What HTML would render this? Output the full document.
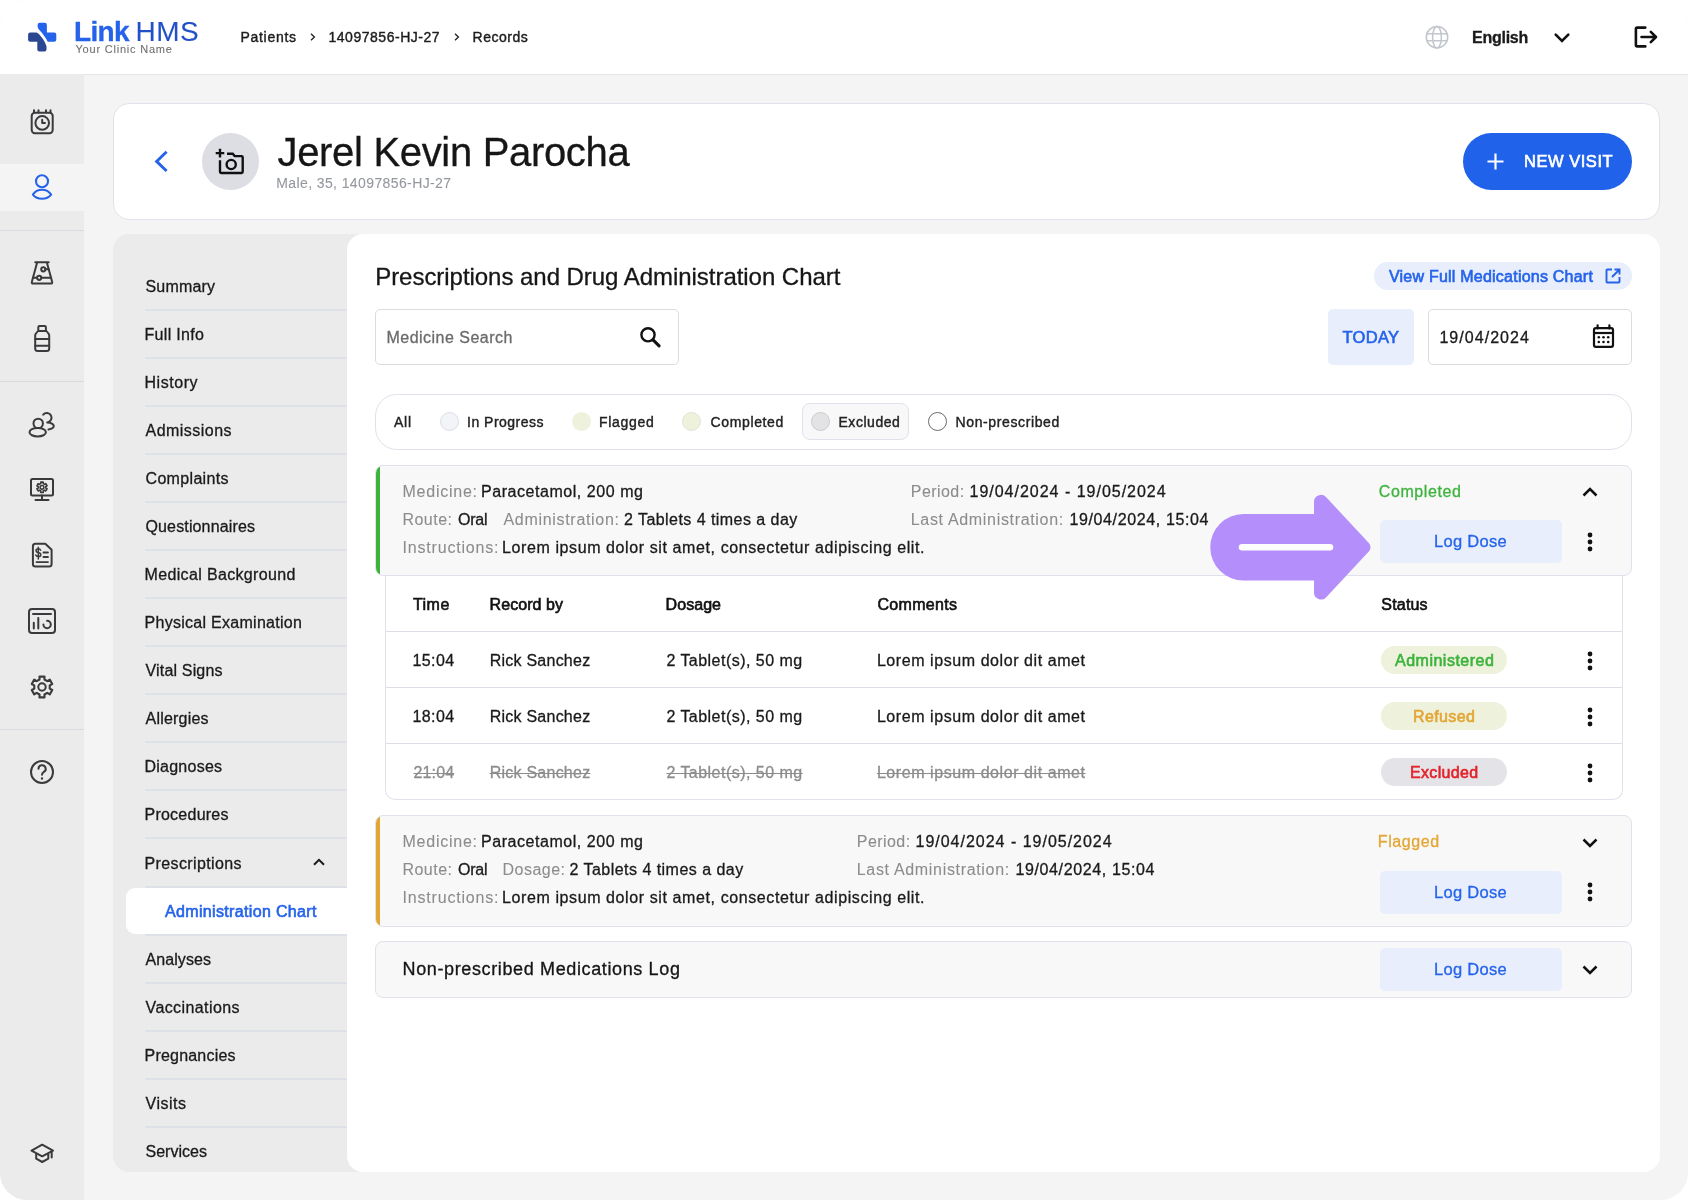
<!DOCTYPE html>
<html lang="en">
<head>
<meta charset="utf-8">
<title>Link HMS - Records</title>
<style>
*{box-sizing:border-box;margin:0;padding:0}
html,body{width:1688px;height:1200px;background:#fff;overflow:hidden}
body{font-family:"Liberation Sans",Arial,sans-serif;color:#1a1a1a}
#app{position:absolute;left:0;top:0;width:1688px;height:1200px;background:#f4f4f4;border-radius:27px;overflow:hidden;will-change:transform}
.t{position:absolute;white-space:pre;line-height:1}
.b{position:absolute}
svg{position:absolute;overflow:visible}
#hdr{position:absolute;left:0;top:0;width:1688px;height:75px;background:#fff;border-bottom:1px solid #e4e4e7}
#side{position:absolute;left:0;top:74px;width:84px;height:1126px;background:#ebebeb}
#side .act{position:absolute;left:0;top:90px;width:84px;height:47px;background:#f4f4f4}
#side .dv{position:absolute;left:0;width:84px;height:1px;background:#d8dadf}
.ic{fill:none;stroke:#3a3a3c;stroke-width:1.9;stroke-linecap:round;stroke-linejoin:round}
#pcard{position:absolute;left:113px;top:103px;width:1547px;height:117px;background:#fff;border:1px solid #dfe2ea;border-radius:16px}
#wrap{position:absolute;left:113px;top:234px;width:1547px;height:938px;background:#ebebeb;border-radius:16px}
#panel{position:absolute;left:347px;top:234px;width:1313px;height:938px;background:#fff;border-radius:16px}
.nl{position:absolute;left:145px;width:202px;height:2px;background:#dee1e8}
.navact{position:absolute;left:126px;top:888px;width:221px;height:46px;background:#fff;border-radius:9px 0 0 9px}
.box{position:absolute;border:1px solid #dfe2ea;background:#fff}
.card{position:absolute;left:375px;width:1257px;border:1px solid #dfe2ea;border-radius:8px;background:#f8f8f8;overflow:hidden}
.card i{position:absolute;left:0;top:0;bottom:0;width:4px}
.btn{position:absolute;background:#e8eefb;border-radius:5px}
.badge{position:absolute;left:1381px;width:126px;height:28px;border-radius:14px}
.rl{position:absolute;left:386px;width:1236px;height:1px;background:#dcdfe5}

.t{-webkit-text-stroke:.3px currentColor}
.l{-webkit-text-stroke:.08px currentColor}
.m{-webkit-text-stroke:.62px currentColor}
.m2{-webkit-text-stroke:.4px currentColor}
.m3{-webkit-text-stroke:.32px currentColor}
.s{text-decoration:line-through;text-decoration-thickness:1px}
</style>
</head>
<body>
<div id="app">

<header id="hdr">
<svg style="left:0;top:0" width="80" height="74" viewBox="0 0 80 74">
<path d="M39.700 22.800H44.800a2.100 2.100 0 0 1 2.100 2.100V32.400H54.200a2.100 2.100 0 0 1 2.100 2.100V39.700a2.100 2.100 0 0 1-2.100 2.100H47.700C45.600 37.500 42.700 33.600 39.600 30.300 38.200 28.800 37.600 27.600 37.600 26V24.900a2.100 2.100 0 0 1 2.100-2.100z" fill="#2563eb"/>
<path d="M30.200 32.400H35.500C37 32.400 37.900 32.900 38.900 34 42 37.400 45 41.500 46.500 46.300V49.400a2.100 2.100 0 0 1-2.100 2.100H39.400a2.100 2.100 0 0 1-2.100-2.100V41.800H30.200a2.100 2.100 0 0 1-2.100-2.100V34.500a2.100 2.100 0 0 1 2.100-2.100z" fill="#2b4792"/>
</svg>
<span class="t" style="left:74.00px;top:17.75px;font-size:28px;font-weight:700;color:#2563eb;letter-spacing:-0.66px;">Link</span>
<span class="t l" style="left:135.50px;top:17.75px;font-size:28px;color:#2150c8;letter-spacing:0.48px;">HMS</span>
<span class="t l" style="left:75.50px;top:43.75px;font-size:11px;color:#6f6f6f;letter-spacing:0.79px;">Your Clinic Name</span>
<span class="t m2" style="left:240.50px;top:30.25px;font-size:14px;color:#1c1c1c;letter-spacing:0.70px;">Patients</span>
<span class="t m2" style="left:328.50px;top:30.25px;font-size:14px;color:#1c1c1c;letter-spacing:0.52px;">14097856-HJ-27</span>
<span class="t m2" style="left:472.50px;top:30.25px;font-size:14px;color:#1c1c1c;letter-spacing:0.53px;">Records</span>
<svg style="left:308px;top:32px" width="10" height="10" viewBox="0 0 10 10"><path d="M3 1.800L6.400 5 3 8.200" fill="none" stroke="#222" stroke-width="1.300"/></svg>
<svg style="left:452px;top:32px" width="10" height="10" viewBox="0 0 10 10"><path d="M3 1.800L6.400 5 3 8.200" fill="none" stroke="#222" stroke-width="1.300"/></svg>
<svg style="left:1425px;top:25px" width="24" height="24" viewBox="0 0 24 24" fill="none" stroke="#c3c6cd" stroke-width="1.500"><circle cx="12" cy="12.200" r="10.700"/><ellipse cx="12" cy="12.200" rx="4.400" ry="10.700"/><path d="M2 8.700h20M2 15.700h20"/></svg>
<span class="t" style="left:1472.10px;top:29.75px;font-size:16px;font-weight:700;letter-spacing:-0.27px;">English</span>
<svg style="left:1552.500px;top:31px" width="18" height="14" viewBox="0 0 18 14"><path d="M2.700 3.700L9 10l6.300-6.300" fill="none" stroke="#111" stroke-width="2.600" stroke-linecap="round"/></svg>
<svg style="left:1632px;top:24px" width="28" height="26" viewBox="0 0 28 26" fill="none" stroke="#111" stroke-width="2.600" stroke-linecap="round" stroke-linejoin="round"><path d="M13.300 3.600H5.200a1.300 1.300 0 0 0-1.300 1.300v16.200a1.300 1.300 0 0 0 1.300 1.300H13.300"/><path d="M9.500 13h14M18.800 7.800L24 13l-5.200 5.200"/></svg>
</header>


<aside id="side">
<div class="act"></div>
<div class="dv" style="top:156px"></div>
<div class="dv" style="top:307px"></div>
<div class="dv" style="top:655px"></div>
<svg class="ic" style="left:26px;top:32px;stroke:#3a3a3c;stroke-width:2.0" width="32" height="32" viewBox="0 0 32 32"><rect x="5.700" y="6.800" width="21" height="20.400" rx="3.200"/><path d="M8 4.300v2M12.500 4.300v2M20 4.300v2M24.500 4.300v2"/><circle cx="16.200" cy="16.900" r="6.800"/><path d="M16.200 13.800v3.100h2.800"/></svg>
<svg class="ic" style="left:26px;top:97px;stroke:#2563eb;stroke-width:2.1" width="32" height="32" viewBox="0 0 32 32"><circle cx="16" cy="10.300" r="6"/><path d="M6.900 23.600C9 20.400 12.300 18.700 16 18.700S23 20.400 25.100 23.600C23 26.400 19.700 27.800 16 27.800S9 26.400 6.900 23.600Z"/></svg>
<svg class="ic" style="left:26px;top:182px;stroke:#3a3a3c;stroke-width:2.0" width="32" height="32" viewBox="0 0 32 32"><path d="M9.300 6.200h13.400M11.200 6.200L5.800 26a1.200 1.200 0 0 0 1.200 1.600h18a1.200 1.200 0 0 0 1.200-1.600L20.800 6.200"/><circle cx="17.300" cy="13.300" r="2.100"/><circle cx="13.200" cy="21.800" r="2.100"/><path d="M15.300 21.800H25M7 21.800h4M19.400 13.300h3.300"/></svg>
<svg class="ic" style="left:26px;top:248px;stroke:#3a3a3c;stroke-width:2.0" width="32" height="32" viewBox="0 0 32 32"><rect x="12.300" y="4" width="7.600" height="5" rx="1.200"/><path d="M12 9h8.400l2 2.500a2.500 2.500 0 0 1 .8 1.800v13.200a2.500 2.500 0 0 1-2.500 2.500h-9a2.500 2.500 0 0 1-2.500-2.500V13.300a2.500 2.500 0 0 1 .8-1.800z"/><path d="M9.200 17h14M9.200 23.700h14"/></svg>
<svg class="ic" style="left:26px;top:334px;stroke:#3a3a3c;stroke-width:2.0" width="32" height="32" viewBox="0 0 32 32"><circle cx="12.200" cy="15.400" r="4.700"/><ellipse cx="11.700" cy="24.200" rx="8.200" ry="4.300"/><path d="M17.200 6.700a4.700 4.700 0 1 1 4 7.700c3.600.300 6.600 1.700 6.600 3.700 0 1.700-2.300 3-5.300 3.500"/></svg>
<svg class="ic" style="left:26px;top:399px;stroke:#3a3a3c;stroke-width:2.0" width="32" height="32" viewBox="0 0 32 32"><rect x="5" y="6" width="22" height="16.500" rx="1.500"/><path d="M16 22.500v4.300M9.500 27h13"/><path d="M14.76 9.15 L17.24 9.15 L17.21 10.59 L18.60 11.40 L19.84 10.65 L21.08 12.79 L19.82 13.50 L19.82 15.10 L21.08 15.81 L19.84 17.95 L18.60 17.20 L17.21 18.01 L17.24 19.45 L14.76 19.45 L14.79 18.01 L13.40 17.20 L12.16 17.95 L10.92 15.81 L12.18 15.10 L12.18 13.50 L10.92 12.79 L12.16 10.65 L13.40 11.40 L14.79 10.59Z" style="stroke-width:1.600"/><circle cx="16" cy="14.300" r="1.900" style="stroke-width:1.500"/></svg>
<svg class="ic" style="left:26px;top:465px;stroke:#3a3a3c;stroke-width:2.0" width="32" height="32" viewBox="0 0 32 32"><path d="M9.400 4.800H19.300l6.300 6V25.100a2.500 2.500 0 0 1-2.500 2.500H9.400a2.500 2.500 0 0 1-2.500-2.500V7.300a2.500 2.500 0 0 1 2.500-2.500z"/><path d="M10.500 23.100h11.500M17.400 13.500h4.600M17.400 18h4.600" style="stroke-width:1.800"/><path d="M14.600 11.300c-.400-1-1.300-1.500-2.300-1.500-1.300 0-2.300.700-2.300 1.900s1 1.600 2.300 1.900c1.400.300 2.500.900 2.500 2.100 0 1.200-1.100 1.900-2.500 1.900-1.200 0-2.200-.600-2.500-1.600M12.300 8.200v11.800" style="stroke-width:1.500"/></svg>
<svg class="ic" style="left:26px;top:531px;stroke:#3a3a3c;stroke-width:2.0" width="32" height="32" viewBox="0 0 32 32"><rect x="3" y="4" width="26" height="24" rx="3"/><path d="M7 9h18M7.800 17.700v5.900M12.300 13.100v10.500"/><path d="M21.100 15.800a3.700 3.700 0 1 1-3.700 3.700" /></svg>
<svg class="ic" style="left:26px;top:597px;stroke:#3a3a3c;stroke-width:2.0" width="32" height="32" viewBox="0 0 32 32"><path d="M13.50 5.60 L18.50 5.60 L18.46 8.49 L21.27 10.12 L23.76 8.63 L26.26 12.96 L23.73 14.37 L23.73 17.63 L26.26 19.04 L23.76 23.37 L21.27 21.88 L18.46 23.51 L18.50 26.40 L13.50 26.40 L13.54 23.51 L10.73 21.88 L8.24 23.37 L5.74 19.04 L8.27 17.63 L8.27 14.37 L5.74 12.96 L8.24 8.63 L10.73 10.12 L13.54 8.49Z" style="stroke-width:2.100"/><circle cx="16" cy="16" r="3.700"/></svg>
<svg class="ic" style="left:26px;top:682px;stroke:#3a3a3c;stroke-width:2.0" width="32" height="32" viewBox="0 0 32 32"><circle cx="16" cy="16" r="11"/><path d="M12.500 12.800a3.600 3.600 0 1 1 5.400 3.100c-1.100.700-1.900 1.500-1.900 2.900"/><circle cx="16" cy="22.500" r=".6" fill="#3a3a3c" style="stroke-width:1.200"/></svg>
<svg class="ic" style="left:26px;top:1063px;stroke:#3a3a3c;stroke-width:2.0" width="32" height="32" viewBox="0 0 32 32"><path d="M16.200 7.700L5.500 13.600 16.200 19.300 27 13.600zM10.200 16.200v5.500L16.200 25l6.100-3.300v-5.500M25.700 14.400v6"/></svg>
</aside>

<section aria-label="Patient">

<div id="pcard"></div>
<svg style="left:150px;top:147px" width="24" height="28" viewBox="0 0 24 28"><path d="M16.600 4.800L6.600 14.400l10 9.600" fill="none" stroke="#2563eb" stroke-width="2.900"/></svg>
<div class="b" style="left:201.500px;top:133px;width:57px;height:57px;border-radius:50%;background:#dcdee4"></div>
<svg style="left:215px;top:147px" width="30" height="30" viewBox="0 0 30 30" fill="none" stroke="#111" stroke-width="2.400"><path d="M5 1.800v8.600M.700 6.100h8.600"/><path d="M12 6.800h5.700l2 2.300h6.800a1.200 1.200 0 0 1 1.200 1.200v14.500a1.200 1.200 0 0 1-1.200 1.200H6.200A1.200 1.200 0 0 1 5 24.800V13.200"/><circle cx="16.200" cy="17.500" r="4.600"/></svg>
<span class="t" style="left:277.50px;top:132.25px;font-size:40px;color:#161616;letter-spacing:-0.32px;">Jerel Kevin Parocha</span>
<span class="t l" style="left:276.30px;top:176.25px;font-size:14px;color:#94979e;letter-spacing:0.39px;">Male, 35, 14097856-HJ-27</span>
<div class="b" style="left:1463px;top:133px;width:169px;height:57px;border-radius:29px;background:#2062ea"></div>
<svg style="left:1486px;top:152px" width="19" height="19" viewBox="0 0 19 19"><path d="M9.500 1.500v16M1.500 9.500h16" stroke="#fff" stroke-width="2.200" fill="none"/></svg>
<span class="t m" style="left:1524.00px;top:153.00px;font-size:16.5px;color:#fff;letter-spacing:0.53px;">NEW VISIT</span>

</section>
<nav aria-label="Patient record sections">
<div id="wrap"></div>
<div class="navact"></div>
<div class="nl" style="top:309px"></div>
<span class="t" style="left:145.50px;top:278.75px;font-size:16px;letter-spacing:0.17px;">Summary</span>
<div class="nl" style="top:357px"></div>
<span class="t" style="left:144.50px;top:326.75px;font-size:16px;letter-spacing:0.31px;">Full Info</span>
<div class="nl" style="top:405px"></div>
<span class="t" style="left:144.50px;top:374.75px;font-size:16px;letter-spacing:0.54px;">History</span>
<div class="nl" style="top:453px"></div>
<span class="t" style="left:145.50px;top:422.75px;font-size:16px;letter-spacing:0.47px;">Admissions</span>
<div class="nl" style="top:501px"></div>
<span class="t" style="left:145.50px;top:470.75px;font-size:16px;letter-spacing:0.33px;">Complaints</span>
<div class="nl" style="top:549px"></div>
<span class="t" style="left:145.50px;top:518.75px;font-size:16px;letter-spacing:0.14px;">Questionnaires</span>
<div class="nl" style="top:597px"></div>
<span class="t" style="left:144.50px;top:566.75px;font-size:16px;letter-spacing:0.35px;">Medical Background</span>
<div class="nl" style="top:645px"></div>
<span class="t" style="left:144.50px;top:614.75px;font-size:16px;letter-spacing:0.28px;">Physical Examination</span>
<div class="nl" style="top:693px"></div>
<span class="t" style="left:145.50px;top:662.75px;font-size:16px;letter-spacing:0.17px;">Vital Signs</span>
<div class="nl" style="top:741px"></div>
<span class="t" style="left:145.50px;top:710.75px;font-size:16px;letter-spacing:0.21px;">Allergies</span>
<div class="nl" style="top:789px"></div>
<span class="t" style="left:144.50px;top:758.75px;font-size:16px;letter-spacing:0.24px;">Diagnoses</span>
<div class="nl" style="top:837px"></div>
<span class="t" style="left:144.50px;top:806.75px;font-size:16px;letter-spacing:0.24px;">Procedures</span>
<div class="nl" style="top:886px"></div>
<span class="t" style="left:144.50px;top:855.75px;font-size:16px;letter-spacing:0.38px;">Prescriptions</span>
<div class="nl" style="top:934px"></div>
<div class="nl" style="top:982px"></div>
<span class="t" style="left:145.50px;top:951.75px;font-size:16px;letter-spacing:0.08px;">Analyses</span>
<div class="nl" style="top:1030px"></div>
<span class="t" style="left:145.50px;top:999.75px;font-size:16px;letter-spacing:0.41px;">Vaccinations</span>
<div class="nl" style="top:1078px"></div>
<span class="t" style="left:144.50px;top:1047.75px;font-size:16px;letter-spacing:0.21px;">Pregnancies</span>
<div class="nl" style="top:1126px"></div>
<span class="t" style="left:145.50px;top:1095.75px;font-size:16px;letter-spacing:0.51px;">Visits</span>
<span class="t" style="left:145.50px;top:1143.75px;font-size:16px;letter-spacing:0.02px;">Services</span>
<span class="t m" style="left:165.00px;top:903.75px;font-size:16px;color:#2563eb;letter-spacing:0.34px;">Administration Chart</span>
<svg style="left:311px;top:855px" width="16" height="14" viewBox="0 0 16 14"><path d="M3 9.800L8 4.800l5 5" fill="none" stroke="#1a1a1a" stroke-width="2"/></svg>

</nav>
<main>

<div id="panel"></div>
<span class="t" style="left:375.20px;top:264.75px;font-size:24px;color:#161616;letter-spacing:-0.04px;">Prescriptions and Drug Administration Chart</span>
<div class="b" style="left:1374px;top:262px;width:258px;height:28px;border-radius:14px;background:#e8eefb"></div>
<span class="t m" style="left:1388.90px;top:268.75px;font-size:16px;color:#2563eb;letter-spacing:0.23px;">View Full Medications Chart</span>
<svg style="left:1604px;top:267px" width="18" height="18" viewBox="0 0 18 18" fill="none" stroke="#2563eb" stroke-width="1.900"><path d="M8 2.500H3.300a.8.800 0 0 0-.8.800v11.400a.8.800 0 0 0 .8.800h11.400a.8.800 0 0 0 .8-.800V10M10.500 2.500h5v5M15.500 2.500L8 10"/></svg>

<div class="box" style="left:375px;top:309px;width:304px;height:56px;border-radius:5px;border-color:#dcdcde"></div>
<span class="t" style="left:386.50px;top:329.75px;font-size:16px;color:#6b6b6b;letter-spacing:0.48px;">Medicine Search</span>
<svg style="left:638px;top:325px" width="24" height="24" viewBox="0 0 24 24" fill="none" stroke="#111" stroke-width="2.400"><circle cx="10" cy="9.800" r="6.600"/><path d="M15.300 15.100l5.800 5.800" stroke-width="3" stroke-linecap="round"/></svg>

<div class="b" style="left:1328px;top:309px;width:86px;height:56px;border-radius:5px;background:#e8eefb"></div>
<span class="t m" style="left:1342.50px;top:329.00px;font-size:16.5px;color:#2563eb;letter-spacing:0.30px;">TODAY</span>
<div class="box" style="left:1428px;top:309px;width:204px;height:56px;border-radius:5px;border-color:#dcdcde"></div>
<span class="t" style="left:1439.40px;top:329.75px;font-size:16px;letter-spacing:1.05px;">19/04/2024</span>
<svg style="left:1591px;top:322px" width="26" height="28" viewBox="0 0 26 28" fill="none" stroke="#111" stroke-width="2.200"><rect x="3" y="6.100" width="19" height="18.800" rx="1.900"/><path d="M3 11h19"/><path d="M6.600 3.400v3M18.400 3.400v3" stroke-linecap="round"/><g fill="#111" stroke="none"><circle cx="7.800" cy="15.300" r="1.300"/><circle cx="12.500" cy="15.300" r="1.300"/><circle cx="17.200" cy="15.300" r="1.300"/><circle cx="7.800" cy="20" r="1.300"/><circle cx="12.500" cy="20" r="1.300"/><circle cx="17.200" cy="20" r="1.300"/></g></svg>

<div class="box" style="left:375px;top:394px;width:1257px;height:56px;border-radius:22px"></div>
<div class="box" style="left:802px;top:403px;width:107px;height:37px;border-radius:8px;background:#f8f8f9"></div>
<span class="t m2" style="left:394.00px;top:415.25px;font-size:14px;color:#222;letter-spacing:0.78px;">All</span>
<span class="t m2" style="left:467.10px;top:415.25px;font-size:14px;color:#222;letter-spacing:0.48px;">In Progress</span>
<span class="t m2" style="left:599.00px;top:415.25px;font-size:14px;color:#222;letter-spacing:0.70px;">Flagged</span>
<span class="t m2" style="left:710.50px;top:415.25px;font-size:14px;color:#222;letter-spacing:0.64px;">Completed</span>
<span class="t m2" style="left:838.50px;top:415.25px;font-size:14px;color:#222;letter-spacing:0.53px;">Excluded</span>
<span class="t m2" style="left:955.50px;top:415.25px;font-size:14px;color:#222;letter-spacing:0.62px;">Non-prescribed</span>
<div class="b" style="left:439.500px;top:412px;width:19px;height:19px;border-radius:50%;background:#f3f4f7;border:1px solid #dcdfe8"></div>
<div class="b" style="left:571.500px;top:412px;width:19px;height:19px;border-radius:50%;background:#eef2dc"></div>
<div class="b" style="left:682px;top:412px;width:19px;height:19px;border-radius:50%;background:#eef1dc;border:1px solid #e0e4d6"></div>
<div class="b" style="left:811px;top:412px;width:19px;height:19px;border-radius:50%;background:#e3e2e5;border:1px solid #cbcbd0"></div>
<div class="b" style="left:928px;top:412px;width:19px;height:19px;border-radius:50%;background:#fff;border:1.300px solid #6a6a6c"></div>


<div class="card" style="top:465px;height:111px"><i style="background:#3db33d"></i></div>
<span class="t l" style="left:402.50px;top:483.75px;font-size:16px;color:#8c8c8c;letter-spacing:0.75px;">Medicine:</span><span class="t" style="left:481.00px;top:483.75px;font-size:16px;letter-spacing:0.55px;">Paracetamol, 200 mg</span>
<span class="t l" style="left:402.50px;top:511.75px;font-size:16px;color:#8c8c8c;letter-spacing:0.46px;">Route:</span><span class="t" style="left:458.00px;top:511.75px;font-size:16px;letter-spacing:-0.22px;">Oral</span>
<span class="t l" style="left:503.50px;top:511.75px;font-size:16px;color:#8c8c8c;letter-spacing:0.69px;">Administration:</span><span class="t" style="left:624.00px;top:511.75px;font-size:16px;letter-spacing:0.45px;">2 Tablets 4 times a day</span>
<span class="t l" style="left:402.50px;top:539.75px;font-size:16px;color:#8c8c8c;letter-spacing:0.81px;">Instructions:</span><span class="t" style="left:502.00px;top:539.75px;font-size:16px;letter-spacing:0.60px;">Lorem ipsum dolor sit amet, consectetur adipiscing elit.</span>
<span class="t l" style="left:910.80px;top:483.75px;font-size:16px;color:#8c8c8c;letter-spacing:0.43px;">Period:</span><span class="t" style="left:969.50px;top:483.75px;font-size:16px;letter-spacing:0.99px;">19/04/2024 - 19/05/2024</span>
<span class="t l" style="left:910.80px;top:511.75px;font-size:16px;color:#8c8c8c;letter-spacing:0.67px;">Last Administration:</span><span class="t" style="left:1069.40px;top:511.75px;font-size:16px;letter-spacing:0.63px;">19/04/2024, 15:04</span>
<span class="t" style="left:1378.80px;top:483.75px;font-size:16px;color:#3db33d;letter-spacing:0.59px;">Completed</span>
<svg style="left:1581.0px;top:485.5px" width="18" height="13" viewBox="0 0 18 13"><path d="M2.500 9.500L9 3l6.500 6.500" fill="none" stroke="#111" stroke-width="2.500"/></svg>
<div class="btn" style="left:1380px;top:520px;width:182px;height:43px"></div><span class="t" style="left:1434.00px;top:533.00px;font-size:16.5px;color:#2563eb;letter-spacing:0.29px;">Log Dose</span>
<svg style="left:1587.0px;top:532.0px" width="6" height="20" viewBox="0 0 6 20" fill="#111"><circle cx="3" cy="3" r="2.400"/><circle cx="3" cy="10" r="2.400"/><circle cx="3" cy="17" r="2.400"/></svg>

<div class="box" style="left:385px;top:576px;width:1238px;height:224px;border-radius:0 0 10px 10px;border-top:none"></div>
<div class="rl" style="top:631px"></div><div class="rl" style="top:687px"></div><div class="rl" style="top:743px"></div>
<span class="t m" style="left:412.90px;top:596.75px;font-size:16px;color:#111;letter-spacing:0.48px;">Time</span><span class="t m" style="left:489.60px;top:596.75px;font-size:16px;color:#111;letter-spacing:0.06px;">Record by</span><span class="t m" style="left:665.60px;top:596.75px;font-size:16px;color:#111;letter-spacing:0.05px;">Dosage</span><span class="t m" style="left:877.50px;top:596.75px;font-size:16px;color:#111;letter-spacing:0.31px;">Comments</span><span class="t m" style="left:1381.30px;top:596.75px;font-size:16px;color:#111;letter-spacing:0.19px;">Status</span>
<span class="t" style="left:412.50px;top:652.75px;font-size:16px;letter-spacing:0.39px;">15:04</span><span class="t" style="left:489.70px;top:652.75px;font-size:16px;letter-spacing:0.24px;">Rick Sanchez</span><span class="t" style="left:666.40px;top:652.75px;font-size:16px;letter-spacing:0.47px;">2 Tablet(s), 50 mg</span><span class="t" style="left:876.90px;top:652.75px;font-size:16px;letter-spacing:0.57px;">Lorem ipsum dolor dit amet</span><svg style="left:1587.0px;top:650.5px" width="6" height="20" viewBox="0 0 6 20" fill="#111"><circle cx="3" cy="3" r="2.400"/><circle cx="3" cy="10" r="2.400"/><circle cx="3" cy="17" r="2.400"/></svg>
<span class="t" style="left:412.50px;top:708.75px;font-size:16px;letter-spacing:0.39px;">18:04</span><span class="t" style="left:489.70px;top:708.75px;font-size:16px;letter-spacing:0.24px;">Rick Sanchez</span><span class="t" style="left:666.40px;top:708.75px;font-size:16px;letter-spacing:0.47px;">2 Tablet(s), 50 mg</span><span class="t" style="left:876.90px;top:708.75px;font-size:16px;letter-spacing:0.57px;">Lorem ipsum dolor dit amet</span><svg style="left:1587.0px;top:706.5px" width="6" height="20" viewBox="0 0 6 20" fill="#111"><circle cx="3" cy="3" r="2.400"/><circle cx="3" cy="10" r="2.400"/><circle cx="3" cy="17" r="2.400"/></svg>
<span class="t s" style="left:413.50px;top:764.75px;font-size:16px;color:#8c8c8c;letter-spacing:0.14px;">21:04</span><span class="t s" style="left:489.70px;top:764.75px;font-size:16px;color:#8c8c8c;letter-spacing:0.24px;">Rick Sanchez</span><span class="t s" style="left:666.40px;top:764.75px;font-size:16px;color:#8c8c8c;letter-spacing:0.47px;">2 Tablet(s), 50 mg</span><span class="t s" style="left:876.90px;top:764.75px;font-size:16px;color:#8c8c8c;letter-spacing:0.57px;">Lorem ipsum dolor dit amet</span><svg style="left:1587.0px;top:762.5px" width="6" height="20" viewBox="0 0 6 20" fill="#111"><circle cx="3" cy="3" r="2.400"/><circle cx="3" cy="10" r="2.400"/><circle cx="3" cy="17" r="2.400"/></svg>

<div class="badge" style="top:646px;background:#eef2dc"></div><span class="t m" style="left:1395.00px;top:652.75px;font-size:16px;color:#3db33d;letter-spacing:0.50px;">Administered</span>
<div class="badge" style="top:702px;background:#eef2dc"></div><span class="t m" style="left:1413.00px;top:708.75px;font-size:16px;color:#e3a634;letter-spacing:0.38px;">Refused</span>
<div class="badge" style="top:758px;background:#e4e3e7"></div><span class="t m" style="left:1410.00px;top:764.75px;font-size:16px;color:#e3242b;letter-spacing:0.34px;">Excluded</span>

<div class="card" style="top:815px;height:112px"><i style="background:#e3a634"></i></div>
<span class="t l" style="left:402.50px;top:833.75px;font-size:16px;color:#8c8c8c;letter-spacing:0.75px;">Medicine:</span><span class="t" style="left:481.00px;top:833.75px;font-size:16px;letter-spacing:0.55px;">Paracetamol, 200 mg</span>
<span class="t l" style="left:402.50px;top:861.75px;font-size:16px;color:#8c8c8c;letter-spacing:0.46px;">Route:</span><span class="t" style="left:458.00px;top:861.75px;font-size:16px;letter-spacing:-0.22px;">Oral</span>
<span class="t l" style="left:502.50px;top:861.75px;font-size:16px;color:#8c8c8c;letter-spacing:0.49px;">Dosage:</span><span class="t" style="left:569.50px;top:861.75px;font-size:16px;letter-spacing:0.47px;">2 Tablets 4 times a day</span>
<span class="t l" style="left:402.50px;top:889.75px;font-size:16px;color:#8c8c8c;letter-spacing:0.81px;">Instructions:</span><span class="t" style="left:502.00px;top:889.75px;font-size:16px;letter-spacing:0.60px;">Lorem ipsum dolor sit amet, consectetur adipiscing elit.</span>
<span class="t l" style="left:856.80px;top:833.75px;font-size:16px;color:#8c8c8c;letter-spacing:0.43px;">Period:</span><span class="t" style="left:915.50px;top:833.75px;font-size:16px;letter-spacing:0.99px;">19/04/2024 - 19/05/2024</span>
<span class="t l" style="left:856.80px;top:861.75px;font-size:16px;color:#8c8c8c;letter-spacing:0.67px;">Last Administration:</span><span class="t" style="left:1015.40px;top:861.75px;font-size:16px;letter-spacing:0.63px;">19/04/2024, 15:04</span>
<span class="t" style="left:1377.80px;top:833.75px;font-size:16px;color:#e3a634;letter-spacing:0.58px;">Flagged</span>
<svg style="left:1580.5px;top:836px" width="18" height="13" viewBox="0 0 18 13"><path d="M2.500 3.500L9 10l6.500-6.500" fill="none" stroke="#111" stroke-width="2.500"/></svg>
<div class="btn" style="left:1380px;top:871px;width:182px;height:43px"></div><span class="t" style="left:1434.00px;top:884.00px;font-size:16.5px;color:#2563eb;letter-spacing:0.29px;">Log Dose</span>
<svg style="left:1587.0px;top:882.2px" width="6" height="20" viewBox="0 0 6 20" fill="#111"><circle cx="3" cy="3" r="2.400"/><circle cx="3" cy="10" r="2.400"/><circle cx="3" cy="17" r="2.400"/></svg>

<div class="card" style="top:941px;height:57px"></div>
<span class="t m3" style="left:402.50px;top:960.25px;font-size:18px;color:#161616;letter-spacing:0.63px;">Non-prescribed Medications Log</span>
<div class="btn" style="left:1380px;top:948px;width:182px;height:43px"></div><span class="t" style="left:1434.00px;top:961.00px;font-size:16.5px;color:#2563eb;letter-spacing:0.29px;">Log Dose</span>
<svg style="left:1580.5px;top:963px" width="18" height="13" viewBox="0 0 18 13"><path d="M2.500 3.500L9 10l6.500-6.500" fill="none" stroke="#111" stroke-width="2.500"/></svg>

<svg style="left:1200px;top:485px" width="180" height="125" viewBox="1200 485 180 125">
<path d="M1243.500 514H1314V502a7 7 0 0 1 12-5L1368.800 543a6 6 0 0 1 0 8.400L1326 597.400a7 7 0 0 1-12-5V580.500H1243.500a33.250 33.250 0 0 1 0-66.500z" fill="#b48efb"/>
<path d="M1242 547.200h88" stroke="#fdfdfd" stroke-width="6.500" stroke-linecap="round" fill="none"/>
</svg>

</main>
</div>
</body>
</html>
